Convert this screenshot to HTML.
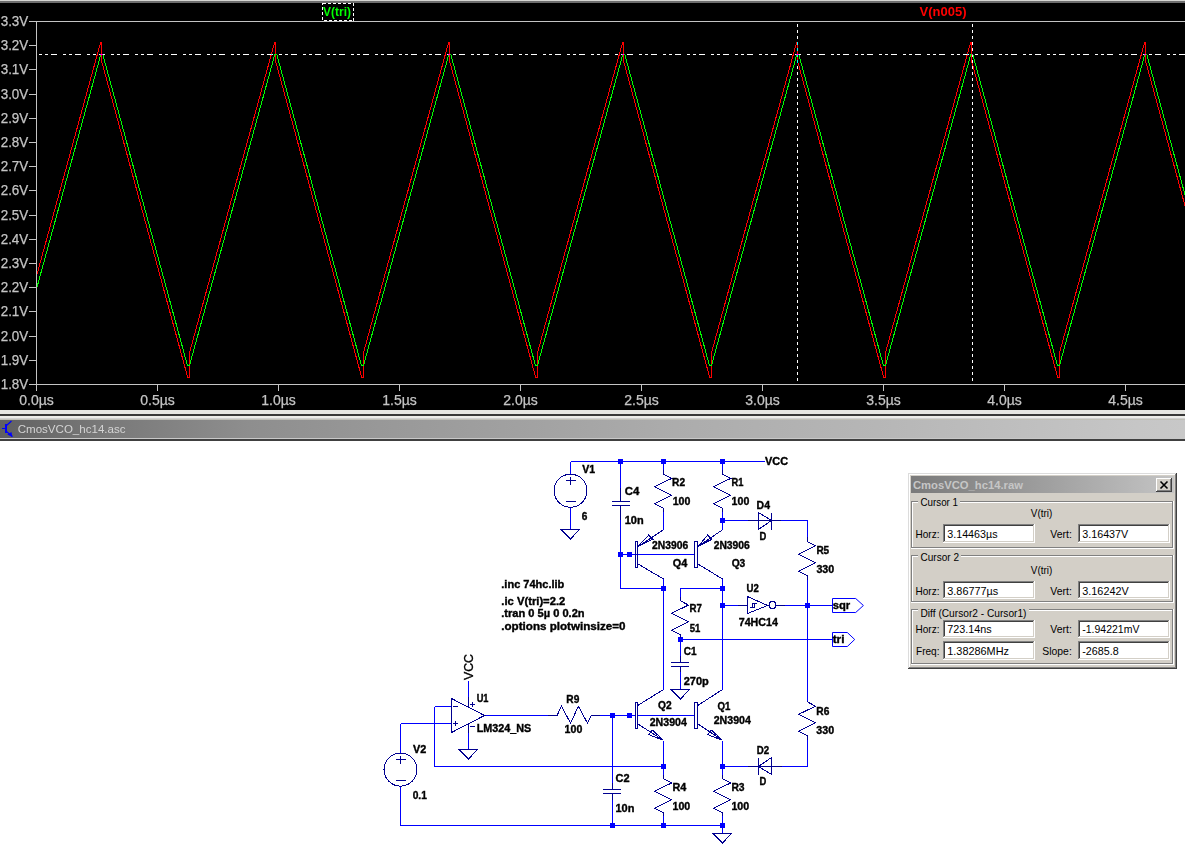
<!DOCTYPE html><html><head><meta charset="utf-8"><style>html,body{margin:0;padding:0;width:1185px;height:848px;overflow:hidden;background:#fff;}</style></head><body><svg width="1185" height="848" style="position:absolute;left:0;top:0" font-family='"Liberation Sans", sans-serif'><rect x="0" y="0" width="1185" height="410" fill="#000"/><rect x="0" y="0" width="1185" height="1" fill="#d6d6d2"/><rect x="0" y="1" width="1185" height="2" fill="#6e6e6e"/><g stroke="#c4c4c4" stroke-width="1" shape-rendering="crispEdges" fill="none"><path d="M29 21.5H1185M36.5 21V391M29 384.5H1185"/><path d="M29 21.5H36M29 45.5H36M29 69.5H36M29 94.5H36M29 118.5H36M29 142.5H36M29 166.5H36M29 190.5H36M29 215.5H36M29 239.5H36M29 263.5H36M29 287.5H36M29 311.5H36M29 336.5H36M29 360.5H36M29 384.5H36M36.5 385V391M157.5 385V391M278.5 385V391M399.5 385V391M520.5 385V391M641.5 385V391M762.5 385V391M883.5 385V391M1004.5 385V391M1125.5 385V391"/></g><g fill="#c4c4c4" font-size="14" text-anchor="end" stroke="#c4c4c4" stroke-width="0.25"><text x="28.3" y="25.9" textLength="27.6" lengthAdjust="spacingAndGlyphs">3.3V</text><text x="28.3" y="50.1" textLength="27.6" lengthAdjust="spacingAndGlyphs">3.2V</text><text x="28.3" y="74.3" textLength="27.6" lengthAdjust="spacingAndGlyphs">3.1V</text><text x="28.3" y="98.5" textLength="27.6" lengthAdjust="spacingAndGlyphs">3.0V</text><text x="28.3" y="122.7" textLength="27.6" lengthAdjust="spacingAndGlyphs">2.9V</text><text x="28.3" y="146.9" textLength="27.6" lengthAdjust="spacingAndGlyphs">2.8V</text><text x="28.3" y="171.1" textLength="27.6" lengthAdjust="spacingAndGlyphs">2.7V</text><text x="28.3" y="195.3" textLength="27.6" lengthAdjust="spacingAndGlyphs">2.6V</text><text x="28.3" y="219.5" textLength="27.6" lengthAdjust="spacingAndGlyphs">2.5V</text><text x="28.3" y="243.7" textLength="27.6" lengthAdjust="spacingAndGlyphs">2.4V</text><text x="28.3" y="267.9" textLength="27.6" lengthAdjust="spacingAndGlyphs">2.3V</text><text x="28.3" y="292.1" textLength="27.6" lengthAdjust="spacingAndGlyphs">2.2V</text><text x="28.3" y="316.3" textLength="27.6" lengthAdjust="spacingAndGlyphs">2.1V</text><text x="28.3" y="340.5" textLength="27.6" lengthAdjust="spacingAndGlyphs">2.0V</text><text x="28.3" y="364.7" textLength="27.6" lengthAdjust="spacingAndGlyphs">1.9V</text><text x="28.3" y="388.9" textLength="27.6" lengthAdjust="spacingAndGlyphs">1.8V</text></g><g fill="#c4c4c4" font-size="14" text-anchor="middle" stroke="#c4c4c4" stroke-width="0.25"><text x="36.5" y="405">0.0µs</text><text x="157.5" y="405">0.5µs</text><text x="278.5" y="405">1.0µs</text><text x="399.5" y="405">1.5µs</text><text x="520.5" y="405">2.0µs</text><text x="641.5" y="405">2.5µs</text><text x="762.5" y="405">3.0µs</text><text x="883.5" y="405">3.5µs</text><text x="1004.5" y="405">4.0µs</text><text x="1125.5" y="405">4.5µs</text></g><defs><clipPath id="plotclip"><rect x="37" y="22" width="1148" height="362"/></clipPath></defs><g clip-path="url(#plotclip)"><polyline fill="none" stroke="#ff0000" stroke-width="1" shape-rendering="crispEdges" points="36.50,276.18 100.59,42.50 101.40,42.50 101.40,60.38 187.66,377.30 189.70,377.30 189.70,352.01 274.59,42.50 275.40,42.50 275.40,60.38 361.66,377.30 363.70,377.30 363.70,352.01 448.59,42.50 449.40,42.50 449.40,60.38 535.66,377.30 537.70,377.30 537.70,352.01 622.59,42.50 623.40,42.50 623.40,60.38 709.66,377.30 711.70,377.30 711.70,352.01 796.59,42.50 797.40,42.50 797.40,60.38 883.66,377.30 885.70,377.30 885.70,352.01 970.59,42.50 971.40,42.50 971.40,60.38 1057.66,377.30 1059.70,377.30 1059.70,352.01 1144.59,42.50 1145.40,42.50 1145.40,60.38 1231.66,377.30 1233.70,377.30 1233.70,352.01"/><polyline fill="none" stroke="#00ff00" stroke-width="1" shape-rendering="crispEdges" points="36.50,288.94 100.80,54.50 102.80,54.50 187.45,365.50 189.50,365.50 274.80,54.50 276.80,54.50 361.45,365.50 363.50,365.50 448.80,54.50 450.80,54.50 535.45,365.50 537.50,365.50 622.80,54.50 624.80,54.50 709.45,365.50 711.50,365.50 796.80,54.50 798.80,54.50 883.45,365.50 885.50,365.50 970.80,54.50 972.80,54.50 1057.45,365.50 1059.50,365.50 1144.80,54.50 1146.80,54.50 1231.45,365.50 1233.50,365.50"/></g><g stroke="#fff" stroke-width="1" shape-rendering="crispEdges" fill="none" style="mix-blend-mode:difference"><path d="M37 54.5H1185" stroke-dasharray="6 6 3 3 3 3" stroke-dashoffset="10"/><path d="M797.5 22V384M972.5 22V384" stroke-dasharray="3 3" stroke-dashoffset="-2"/></g><rect x="322.5" y="3.5" width="31" height="17" fill="none" stroke="#fff" stroke-dasharray="3 2" shape-rendering="crispEdges"/><text x="323" y="16" fill="#00ff00" font-size="13" font-weight="bold" textLength="28" lengthAdjust="spacingAndGlyphs">V(tri)</text><text x="919.5" y="16" fill="#ff0000" font-size="13" font-weight="bold">V(n005)</text><rect x="0" y="410" width="1185" height="4" fill="#e6e6e2"/><rect x="0" y="414" width="1185" height="2" fill="#383838"/><rect x="0" y="416" width="1185" height="2" fill="#ecece8"/><rect x="0" y="418" width="1185" height="1" fill="#d0d0d0"/><rect x="0" y="419" width="1185" height="1" fill="#c0c0b8"/><defs><linearGradient id="tbg" x1="0" x2="1185" y1="0" y2="0" gradientUnits="userSpaceOnUse"><stop offset="0" stop-color="#606060"/><stop offset="0.085" stop-color="#787878"/><stop offset="0.21" stop-color="#8e8e8e"/><stop offset="0.32" stop-color="#989898"/><stop offset="0.45" stop-color="#a2a2a2"/><stop offset="0.57" stop-color="#acacac"/><stop offset="0.74" stop-color="#b6b6b6"/><stop offset="0.96" stop-color="#c6c6c6"/><stop offset="1" stop-color="#c8c8c8"/></linearGradient></defs><rect x="0" y="420" width="1185" height="18" fill="url(#tbg)"/><rect x="0" y="438" width="1185" height="1" fill="#c8c8c8"/><rect x="0" y="439" width="1185" height="2" fill="#404040"/><rect x="0" y="441" width="1185" height="407" fill="#fff"/><g fill="#0000ff" shape-rendering="crispEdges"><rect x="2" y="428" width="3" height="1"/><rect x="5" y="424" width="2" height="9"/></g><g stroke="#0000ff" stroke-width="1.2" fill="none"><path d="M6.5 425.5L11.5 421M6.5 431.5L12.5 436.5"/><path d="M8.5 434.5L11 433L11.5 436Z" fill="#0000ff"/></g><text x="17.7" y="433.2" fill="#d4d4d4" font-size="11.5" textLength="107.8" lengthAdjust="spacingAndGlyphs">CmosVCO_hc14.asc</text><g stroke="#0000ff" stroke-width="1" fill="none" shape-rendering="crispEdges"><path d="M570.5 461.5H764.5M570.5 461.5V474M570.5 507V529.5M620.5 461.5V488M620.5 520V588.5H663.5M620.5 554.5H695M663.5 461.5V470M663.5 512V529.5M722.5 461.5V470M722.5 512V529.5M722.5 520.5H748M781 520.5H807.5V537M807.5 580V702M807.5 740V766.5H782M663.5 579V689.5M722.5 579V689.5M722.5 588.5H680.5V597M680.5 638V656M680.5 672V689.5M680.5 639.5H832M722.5 605.5H738M785 605.5H832M434.5 706.5H451.5M434.5 706.5V766.5H663.5M400.5 723.5H451.5M400.5 723.5V753M400.5 786V825.5H722.5M468.5 681V697M468.5 733V749M485 715.5H548M600 715.5H635M612.5 715.5V783M612.5 800V825.5M663.5 740.5V775M663.5 816V825.5M722.5 740.5V775M722.5 816V833M722.5 766.5H748M638 715.5H694"/></g><g fill="#0000ff"><rect x="618" y="459" width="5" height="5"/><rect x="661" y="459" width="5" height="5"/><rect x="720" y="459" width="5" height="5"/><rect x="618" y="552" width="5" height="5"/><rect x="627" y="552" width="5" height="5"/><rect x="720" y="518" width="5" height="5"/><rect x="661" y="586" width="5" height="5"/><rect x="720" y="586" width="5" height="5"/><rect x="720" y="603" width="5" height="5"/><rect x="805" y="603" width="5" height="5"/><rect x="678" y="637" width="5" height="5"/><rect x="610" y="713" width="5" height="5"/><rect x="627" y="713" width="5" height="5"/><rect x="661" y="764" width="5" height="5"/><rect x="720" y="764" width="5" height="5"/><rect x="610" y="823" width="5" height="5"/><rect x="661" y="823" width="5" height="5"/><rect x="720" y="823" width="5" height="5"/></g><g stroke="#000090" stroke-width="1" fill="none" shape-rendering="crispEdges"><path d="M565.5 480.7h10M570.5 476.7v8M565.5 501.2h10M395.5 759.6h10M400.5 755.6v8M395.5 780.1h10M561.0 529.5H579.5L570.5 539.0ZM459.0 749.5H477.5L468.5 759.0ZM671.0 689.5H689.5L680.5 699.0ZM713.0 833.5H731.5L722.5 843.0ZM612 501.5H630M612 505.5H630M620.5 488V501.5M620.5 505.5V520M671 662.5H689M671 666.5H689M680.5 656V662.5M680.5 666.5V672M603 789.5H621M603 793.5H621M612.5 783V789.5M612.5 793.5V800M663.5 470V474.2L671.5 478.5L654.5 486.7L671.5 495.2L654.5 503.7L663.5 508.2V512M722.5 470V474.2L730.5 478.5L713.5 486.7L730.5 495.2L713.5 503.7L722.5 508.2V512M807.5 537V541.6L815.5 545.9L798.5 554.1L815.5 562.6L798.5 571.1L807.5 575.6V580M680.5 597V600.8L688.5 605.0999999999999L671.5 613.3L688.5 621.8L671.5 630.3L680.5 634.8V638M807.5 702V701.9L815.5 706.1999999999999L798.5 714.4L815.5 722.9L798.5 731.4L807.5 735.9V740M663.5 775V778.7L671.5 783.0L654.5 791.2L671.5 799.7L654.5 808.2L663.5 812.7V816M722.5 775V778.7L730.5 783.0L713.5 791.2L730.5 799.7L713.5 808.2L722.5 812.7V816M548 715.5H557.1L561.4 706.2L570.6 723.2L578.3 706.2L587.5 723.2L591.1 715.5H600M635.5 541.5H637.5V567.5H635.5ZM638 546.5L663.5 529.8M638 564L663.5 579M638 546.5L648.6 535.1L652.8 539.3ZM694.5 541.5H697.5V567.5H694.5ZM698 546.5L722.5 529.8M698 564L722.5 579M698 546.5L707.6 535.1L711.8 539.3ZM635.5 702.5H637.5V728.5H635.5ZM638 705.3L663.5 689.5M638 724.1L663.5 740.3M663.5 740.3L648.3 734.5L652.5 730.2ZM694.5 702.5H697.5V728.5H694.5ZM698 705.3L722.5 689.5M698 724.1L722.5 740.3M722.5 740.3L707.3 734.5L711.5 730.2ZM748 520.5H781M758.5 512.5V529.5L771.5 520.5ZM771.5 512.5V529.5M748 766.5H782M758.5 757.5V774.5M771.5 757.5V774.5L758.5 766.5ZM451.5 698.5V732.5L484.5 715.5ZM453 706.5h5M453 723.5h5M455.5 721v5M468.5 697V706.5M468.5 724V733M470 704.5h5M472.5 702v5M470 726.5h5M738 605.5H747.5M747.5 596.5V613.5L767.5 605.5ZM776.2 605.5H785M749.5 607.5H754.5M752.5 607.5V603.5H756.5M754.5 603.5V607.5"/><circle cx="570.5" cy="490.7" r="16.5"/><circle cx="400.5" cy="769.6" r="16.5"/><circle cx="772.5" cy="605" r="3.5"/></g><g stroke="#0000ff" stroke-width="1" fill="none"><path d="M832.5 598.5H855.7L863.4 605.5L855.7 612.5H832.5Z"/><path d="M832.5 632.5H847.3L854.7 639.5L847.3 646.5H832.5Z"/></g><g fill="#000" font-size="10" font-weight="bold" stroke="#000" stroke-width="0.35"><text x="582.2" y="473" textLength="12.9" lengthAdjust="spacingAndGlyphs">V1</text><text x="581.7" y="520" textLength="5.6" lengthAdjust="spacingAndGlyphs">6</text><text x="624.7" y="494.8" textLength="14.6" lengthAdjust="spacingAndGlyphs">C4</text><text x="624.7" y="524" textLength="18.900000000000002" lengthAdjust="spacingAndGlyphs">10n</text><text x="672.1" y="485.8" textLength="13.0" lengthAdjust="spacingAndGlyphs">R2</text><text x="672.7" y="505" textLength="17.700000000000003" lengthAdjust="spacingAndGlyphs">100</text><text x="731.6" y="485.6" textLength="11.9" lengthAdjust="spacingAndGlyphs">R1</text><text x="731.6" y="504.8" textLength="17.700000000000003" lengthAdjust="spacingAndGlyphs">100</text><text x="765.1" y="464.8" textLength="23.0" lengthAdjust="spacingAndGlyphs">VCC</text><text x="756.6" y="508.6" textLength="13.4" lengthAdjust="spacingAndGlyphs">D4</text><text x="759.5" y="540" textLength="6.8" lengthAdjust="spacingAndGlyphs">D</text><text x="652.1" y="548.6" textLength="36.1" lengthAdjust="spacingAndGlyphs">2N3906</text><text x="672.7" y="566.8" textLength="14.5" lengthAdjust="spacingAndGlyphs">Q4</text><text x="713.7" y="548.6" textLength="36.1" lengthAdjust="spacingAndGlyphs">2N3906</text><text x="731.7" y="566.8" textLength="13.6" lengthAdjust="spacingAndGlyphs">Q3</text><text x="816.4000000000001" y="553.8" textLength="12.799999999999999" lengthAdjust="spacingAndGlyphs">R5</text><text x="816.4000000000001" y="573" textLength="17.8" lengthAdjust="spacingAndGlyphs">330</text><text x="746.6" y="591.5" textLength="12.299999999999999" lengthAdjust="spacingAndGlyphs">U2</text><text x="738.7" y="625.7" textLength="39.2" lengthAdjust="spacingAndGlyphs">74HC14</text><text x="689.5" y="612.4" textLength="12.4" lengthAdjust="spacingAndGlyphs">R7</text><text x="689.7" y="631.7" textLength="10.6" lengthAdjust="spacingAndGlyphs">51</text><text x="683.8000000000001" y="655.1" textLength="12.799999999999999" lengthAdjust="spacingAndGlyphs">C1</text><text x="683.7" y="684.6" textLength="25.1" lengthAdjust="spacingAndGlyphs">270p</text><text x="832.7" y="609" textLength="17.5" lengthAdjust="spacingAndGlyphs">sqr</text><text x="832.7" y="643" textLength="11.799999999999999" lengthAdjust="spacingAndGlyphs">tri</text><text x="501.3" y="588" textLength="63.0" lengthAdjust="spacingAndGlyphs">.inc 74hc.lib</text><text x="501.3" y="604.8" textLength="64.0" lengthAdjust="spacingAndGlyphs">.ic V(tri)=2.2</text><text x="501.3" y="616.8" textLength="83.3" lengthAdjust="spacingAndGlyphs">.tran 0 5µ 0 0.2n</text><text x="501.3" y="629.7" textLength="124.19999999999999" lengthAdjust="spacingAndGlyphs">.options plotwinsize=0</text><text x="476.7" y="701.6" textLength="11.799999999999999" lengthAdjust="spacingAndGlyphs">U1</text><text x="476.7" y="732" textLength="54.6" lengthAdjust="spacingAndGlyphs">LM324_NS</text><text x="413.0" y="752.5" textLength="13.299999999999999" lengthAdjust="spacingAndGlyphs">V2</text><text x="412.7" y="798.6" textLength="14.2" lengthAdjust="spacingAndGlyphs">0.1</text><text x="566.3000000000001" y="702.7" textLength="13.0" lengthAdjust="spacingAndGlyphs">R9</text><text x="564.6" y="733.4" textLength="17.700000000000003" lengthAdjust="spacingAndGlyphs">100</text><text x="658.0" y="709.3" textLength="13.6" lengthAdjust="spacingAndGlyphs">Q2</text><text x="649.7" y="725.6" textLength="37.2" lengthAdjust="spacingAndGlyphs">2N3904</text><text x="717.6" y="709.6" textLength="12.9" lengthAdjust="spacingAndGlyphs">Q1</text><text x="713.7" y="723.8" textLength="37.2" lengthAdjust="spacingAndGlyphs">2N3904</text><text x="615.5" y="781.8" textLength="14.1" lengthAdjust="spacingAndGlyphs">C2</text><text x="615.5" y="812.1" textLength="18.900000000000002" lengthAdjust="spacingAndGlyphs">10n</text><text x="672.5" y="790.8" textLength="13.799999999999999" lengthAdjust="spacingAndGlyphs">R4</text><text x="672.5" y="810" textLength="17.700000000000003" lengthAdjust="spacingAndGlyphs">100</text><text x="731.4000000000001" y="790.8" textLength="13.2" lengthAdjust="spacingAndGlyphs">R3</text><text x="731.4000000000001" y="810" textLength="17.700000000000003" lengthAdjust="spacingAndGlyphs">100</text><text x="756.8000000000001" y="753.6" textLength="12.4" lengthAdjust="spacingAndGlyphs">D2</text><text x="759.6" y="784.6" textLength="6.8" lengthAdjust="spacingAndGlyphs">D</text><text x="816.3000000000001" y="714.8" textLength="13.0" lengthAdjust="spacingAndGlyphs">R6</text><text x="816.3000000000001" y="733.7" textLength="17.8" lengthAdjust="spacingAndGlyphs">330</text><text transform="translate(473 680) rotate(-90)" font-weight="normal" font-size="13" textLength="26" lengthAdjust="spacingAndGlyphs">VCC</text></g></svg><svg width="1185" height="848" style="position:absolute;left:0;top:0" font-family='"Liberation Sans", sans-serif' shape-rendering="crispEdges"><rect x="908" y="473" width="269" height="196" fill="#d3cfc7"/><path d="M908.5 668V473.5H1176" stroke="#dcdcdc" fill="none"/><path d="M909.5 667V474.5H1175" stroke="#ffffff" fill="none"/><path d="M908 668.5H1176.5V473" stroke="#404040" fill="none"/><path d="M909 667.5H1175.5V474" stroke="#808080" fill="none"/><defs><linearGradient id="dtg" x1="0" x2="1"><stop offset="0" stop-color="#7a7a7a"/><stop offset="0.5" stop-color="#9e9e9e"/><stop offset="1" stop-color="#c4c4c4"/></linearGradient></defs><rect x="911" y="476" width="263" height="17" fill="url(#dtg)"/><text x="913" y="488.6" font-size="11" font-weight="bold" fill="#c6c6c6" textLength="110" lengthAdjust="spacingAndGlyphs">CmosVCO_hc14.raw</text><rect x="1156" y="478" width="16" height="14" fill="#d3cfc7"/><path d="M1156.5 491V478.5H1171" stroke="#fff" fill="none"/><path d="M1156 491.5H1171.5V478" stroke="#404040" fill="none"/><path d="M1157 490.5H1170.5V479" stroke="#808080" fill="none"/><path d="M1160.5 481.5L1167.5 488.5M1167.5 481.5L1160.5 488.5" stroke="#000" stroke-width="1.6" fill="none" shape-rendering="auto"/><path d="M911.5 501.5V547.5H1172.5V501.5Z" stroke="#808080" fill="none"/><path d="M912.5 547V502.5H1172M910.5 548.5H1173.5V501" stroke="#fff" fill="none"/><rect x="918" y="495" width="42" height="10" fill="#d3cfc7"/><path d="M911.5 555.5V601.5H1172.5V555.5Z" stroke="#808080" fill="none"/><path d="M912.5 601V556.5H1172M910.5 602.5H1173.5V555" stroke="#fff" fill="none"/><rect x="918" y="549" width="43" height="10" fill="#d3cfc7"/><path d="M911.5 609.5V663.5H1172.5V609.5Z" stroke="#808080" fill="none"/><path d="M912.5 663V610.5H1172M910.5 664.5H1173.5V609" stroke="#fff" fill="none"/><rect x="918" y="603" width="111" height="10" fill="#d3cfc7"/><rect x="943" y="524" width="92" height="19" fill="#fff"/><path d="M943.5 542V524.5H1034" stroke="#808080" fill="none"/><path d="M944.5 541V525.5H1033" stroke="#404040" fill="none"/><path d="M943 542.5H1034.5V524" stroke="#ffffff" fill="none"/><path d="M944 541.5H1033.5V525" stroke="#d3cfc7" fill="none"/><rect x="1078" y="524" width="92" height="19" fill="#fff"/><path d="M1078.5 542V524.5H1169" stroke="#808080" fill="none"/><path d="M1079.5 541V525.5H1168" stroke="#404040" fill="none"/><path d="M1078 542.5H1169.5V524" stroke="#ffffff" fill="none"/><path d="M1079 541.5H1168.5V525" stroke="#d3cfc7" fill="none"/><rect x="943" y="581" width="92" height="18" fill="#fff"/><path d="M943.5 598V581.5H1034" stroke="#808080" fill="none"/><path d="M944.5 597V582.5H1033" stroke="#404040" fill="none"/><path d="M943 598.5H1034.5V581" stroke="#ffffff" fill="none"/><path d="M944 597.5H1033.5V582" stroke="#d3cfc7" fill="none"/><rect x="1078" y="581" width="92" height="18" fill="#fff"/><path d="M1078.5 598V581.5H1169" stroke="#808080" fill="none"/><path d="M1079.5 597V582.5H1168" stroke="#404040" fill="none"/><path d="M1078 598.5H1169.5V581" stroke="#ffffff" fill="none"/><path d="M1079 597.5H1168.5V582" stroke="#d3cfc7" fill="none"/><rect x="943" y="620" width="92" height="18" fill="#fff"/><path d="M943.5 637V620.5H1034" stroke="#808080" fill="none"/><path d="M944.5 636V621.5H1033" stroke="#404040" fill="none"/><path d="M943 637.5H1034.5V620" stroke="#ffffff" fill="none"/><path d="M944 636.5H1033.5V621" stroke="#d3cfc7" fill="none"/><rect x="1078" y="620" width="92" height="18" fill="#fff"/><path d="M1078.5 637V620.5H1169" stroke="#808080" fill="none"/><path d="M1079.5 636V621.5H1168" stroke="#404040" fill="none"/><path d="M1078 637.5H1169.5V620" stroke="#ffffff" fill="none"/><path d="M1079 636.5H1168.5V621" stroke="#d3cfc7" fill="none"/><rect x="943" y="641" width="92" height="19" fill="#fff"/><path d="M943.5 659V641.5H1034" stroke="#808080" fill="none"/><path d="M944.5 658V642.5H1033" stroke="#404040" fill="none"/><path d="M943 659.5H1034.5V641" stroke="#ffffff" fill="none"/><path d="M944 658.5H1033.5V642" stroke="#d3cfc7" fill="none"/><rect x="1078" y="641" width="92" height="19" fill="#fff"/><path d="M1078.5 659V641.5H1169" stroke="#808080" fill="none"/><path d="M1079.5 658V642.5H1168" stroke="#404040" fill="none"/><path d="M1078 659.5H1169.5V641" stroke="#ffffff" fill="none"/><path d="M1079 658.5H1168.5V642" stroke="#d3cfc7" fill="none"/><g font-size="11.5" fill="#000" shape-rendering="auto"><text x="915.5" y="537.8" text-anchor="start" textLength="24" lengthAdjust="spacingAndGlyphs">Horz:</text><text x="1050.3" y="537.8" text-anchor="start" textLength="21.5" lengthAdjust="spacingAndGlyphs">Vert:</text><text x="947.3" y="537.8" text-anchor="start" textLength="50.2" lengthAdjust="spacingAndGlyphs">3.14463µs</text><text x="1082.3" y="537.8" text-anchor="start" textLength="45.9" lengthAdjust="spacingAndGlyphs">3.16437V</text><text x="915.5" y="594.5" text-anchor="start" textLength="24" lengthAdjust="spacingAndGlyphs">Horz:</text><text x="1050.3" y="594.5" text-anchor="start" textLength="21.5" lengthAdjust="spacingAndGlyphs">Vert:</text><text x="947.3" y="594.5" text-anchor="start" textLength="51.0" lengthAdjust="spacingAndGlyphs">3.86777µs</text><text x="1082.3" y="594.5" text-anchor="start" textLength="46.4" lengthAdjust="spacingAndGlyphs">3.16242V</text><text x="915.5" y="633.3" text-anchor="start" textLength="24" lengthAdjust="spacingAndGlyphs">Horz:</text><text x="1050.3" y="633.3" text-anchor="start" textLength="21.5" lengthAdjust="spacingAndGlyphs">Vert:</text><text x="947.3" y="633.3" text-anchor="start" textLength="44.4" lengthAdjust="spacingAndGlyphs">723.14ns</text><text x="1082.3" y="633.3" text-anchor="start" textLength="57.1" lengthAdjust="spacingAndGlyphs">-1.94221mV</text><text x="916.0" y="654.7" text-anchor="start" textLength="23.5" lengthAdjust="spacingAndGlyphs">Freq:</text><text x="1042.3" y="654.7" text-anchor="start" textLength="29.5" lengthAdjust="spacingAndGlyphs">Slope:</text><text x="947.3" y="654.7" text-anchor="start" textLength="61.7" lengthAdjust="spacingAndGlyphs">1.38286MHz</text><text x="1082.3" y="654.7" text-anchor="start" textLength="36.4" lengthAdjust="spacingAndGlyphs">-2685.8</text><text x="920.5" y="505.6" text-anchor="start" textLength="37.5" lengthAdjust="spacingAndGlyphs">Cursor 1</text><text x="920.5" y="560.6" text-anchor="start" textLength="38.5" lengthAdjust="spacingAndGlyphs">Cursor 2</text><text x="920.5" y="616.8" text-anchor="start" textLength="106" lengthAdjust="spacingAndGlyphs">Diff (Cursor2 - Cursor1)</text><text x="1030.8" y="516.9" text-anchor="start" textLength="21.5" lengthAdjust="spacingAndGlyphs">V(tri)</text><text x="1030.8" y="573.9" text-anchor="start" textLength="21.5" lengthAdjust="spacingAndGlyphs">V(tri)</text></g></svg></body></html>
